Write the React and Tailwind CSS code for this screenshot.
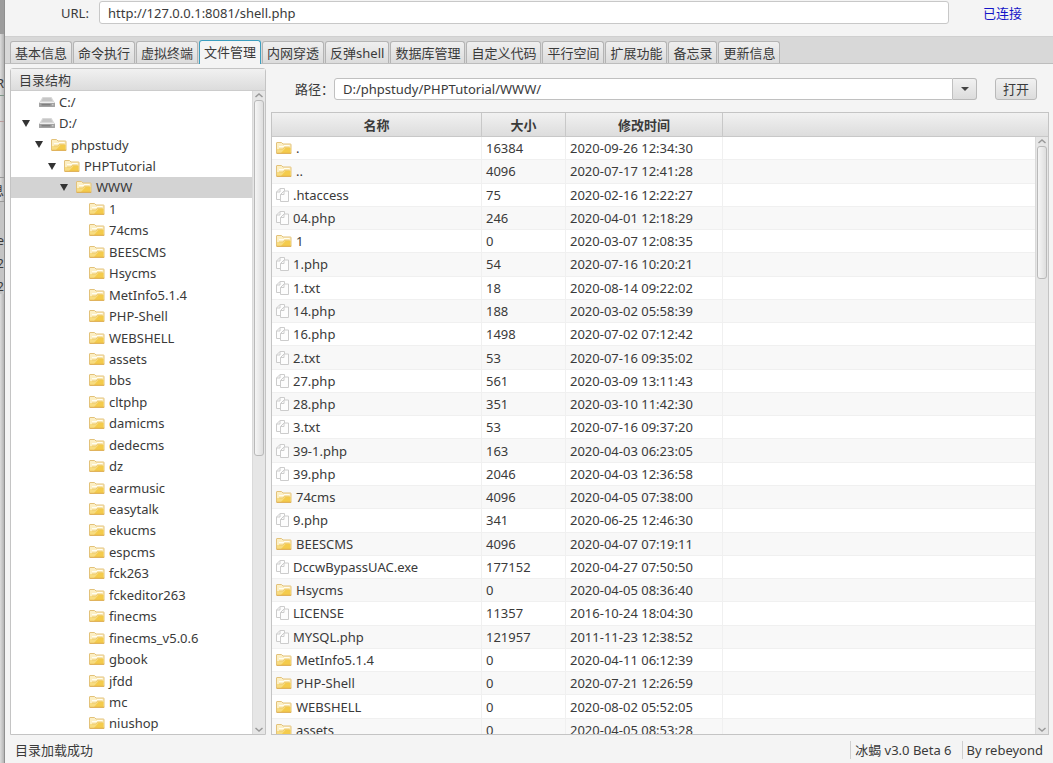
import React from 'react';

const tabs = ['基本信息', '命令执行', '虚拟终端', '文件管理', '内网穿透', '反弹shell', '数据库管理', '自定义代码', '平行空间', '扩展功能', '备忘录', '更新信息'];

const tree = [
    { name: 'C:/', indent: 'pl-[7px]', type: 'disk' },
    { name: 'D:/', indent: 'pl-[7px]', type: 'disk', open: true },
    { name: 'phpstudy', indent: 'pl-5', open: true },
    { name: 'PHPTutorial', indent: 'pl-[33px]', open: true },
    { name: 'WWW', indent: 'pl-[45px]', open: true, selected: true },
    ...['1', '74cms', 'BEESCMS', 'Hsycms', 'MetInfo5.1.4', 'PHP-Shell', 'WEBSHELL', 'assets', 'bbs', 'cltphp', 'damicms', 'dedecms', 'dz', 'earmusic', 'easytalk', 'ekucms', 'espcms', 'fck263', 'fckeditor263', 'finecms', 'finecms_v5.0.6', 'gbook', 'jfdd', 'mc', 'niushop'].map((name) => ({ name, indent: 'pl-[58px]' }))
];

const files = [
    { name: '.', size: 16384, date: '2020-09-26 12:34:30', dir: true },
    { name: '..', size: 4096, date: '2020-07-17 12:41:28', dir: true },
    { name: '.htaccess', size: 75, date: '2020-02-16 12:22:27' },
    { name: '04.php', size: 246, date: '2020-04-01 12:18:29' },
    { name: '1', size: 0, date: '2020-03-07 12:08:35', dir: true },
    { name: '1.php', size: 54, date: '2020-07-16 10:20:21' },
    { name: '1.txt', size: 18, date: '2020-08-14 09:22:02' },
    { name: '14.php', size: 188, date: '2020-03-02 05:58:39' },
    { name: '16.php', size: 1498, date: '2020-07-02 07:12:42' },
    { name: '2.txt', size: 53, date: '2020-07-16 09:35:02' },
    { name: '27.php', size: 561, date: '2020-03-09 13:11:43' },
    { name: '28.php', size: 351, date: '2020-03-10 11:42:30' },
    { name: '3.txt', size: 53, date: '2020-07-16 09:37:20' },
    { name: '39-1.php', size: 163, date: '2020-04-03 06:23:05' },
    { name: '39.php', size: 2046, date: '2020-04-03 12:36:58' },
    { name: '74cms', size: 4096, date: '2020-04-05 07:38:00', dir: true },
    { name: '9.php', size: 341, date: '2020-06-25 12:46:30' },
    { name: 'BEESCMS', size: 4096, date: '2020-04-07 07:19:11', dir: true },
    { name: 'DccwBypassUAC.exe', size: 177152, date: '2020-04-27 07:50:50' },
    { name: 'Hsycms', size: 0, date: '2020-04-05 08:36:40', dir: true },
    { name: 'LICENSE', size: 11357, date: '2016-10-24 18:04:30' },
    { name: 'MYSQL.php', size: 121957, date: '2011-11-23 12:38:52' },
    { name: 'MetInfo5.1.4', size: 0, date: '2020-04-11 06:12:39', dir: true },
    { name: 'PHP-Shell', size: 0, date: '2020-07-21 12:26:59', dir: true },
    { name: 'WEBSHELL', size: 0, date: '2020-08-02 05:52:05', dir: true },
    { name: 'assets', size: 0, date: '2020-04-05 08:53:28', dir: true }
];

const FolderIcon = () => (
    <svg width="16" height="14" viewBox="0 0 16 14" className="shrink-0">
        <path d="M.5 12V2Q.5 1.5 1 1.5H5.5L7 3H14.5Q15 3 15 3.5V12Z" fill="#fcefc4" stroke="#e3c27a" />
        <path d="M8 4.5H13.5" stroke="#fffdf2" />
        <path d="M3 5.5H8" stroke="#fffdf2" />
        <path d="M1 12V8H7L8.5 6H14.5V12Z" fill="#f8dc80" />
        <path d="M5 12L9.5 7H14.5V12Z" fill="#f4cb4c" />
        <path d="M3 8H7L8.5 6.2H13.5" fill="none" stroke="#ecc96d" />
        <path d="M.5 12.3H15.3" stroke="#dca845" />
    </svg>
);

const DiskIcon = () => (
    <svg width="18" height="14" viewBox="0 0 18 14" className="shrink-0">
        <path d="M4.5 2H13.5L17 8H1Z" fill="#d8d8d8" />
        <path d="M5 3H13L14.5 6H3.5Z" fill="#c6c6c6" />
        <path d="M1 7.5H17V11.5Q17 12 16 12H2Q1 12 1 11.5Z" fill="#a2a2a2" />
        <path d="M1.5 7.5H16.5" stroke="#efefef" />
        <path d="M3.5 9.8H12.5" stroke="#717171" />
        <path d="M14 9.8H15.5" stroke="#dcdcdc" />
    </svg>
);

const FileIcon = () => (
    <svg width="14" height="16" viewBox="0 0 14 16" fill="#fdfdfd" stroke="#cccccc" className="shrink-0">
        <path d="M.5 12.5V5L4 1.5H8.5V12.5Z" />
        <path d="M.5 5H4V1.5" fill="none" />
        <path d="M4.5 14.5V7.5L8 4H12.5V14.5Z" />
        <path d="M4.5 7.5H8V4" fill="none" />
    </svg>
);

const ScrollBar = ({ thumb }) => (
    <div className="flex h-full w-[13px] shrink-0 flex-col items-center border-l border-[#dadada] bg-[#e6e6e6]">
        <svg width="10" height="9" viewBox="0 0 10 9" fill="none" stroke="#999" strokeWidth="1.5"><path d="M1.5 6L5 3L8.5 6" /></svg>
        <div className="flex min-h-0 w-full flex-1 flex-col px-px">
            <div className={`w-full rounded-[3px] border border-[#b9b9b9] bg-linear-to-r from-[#f5f5f5] to-[#dedede] ${thumb}`}></div>
        </div>
        <svg width="10" height="9" viewBox="0 0 10 9" fill="none" stroke="#999" strokeWidth="1.5"><path d="M1.5 3L5 6L8.5 3" /></svg>
    </div>
);

const App = () => {
    return (
        <div className="flex h-screen overflow-hidden bg-[#f4f4f4] font-['Noto_Sans','Noto_Sans_CJK_SC',sans-serif] text-[13px] leading-4 text-[#3a3a3a]">
            {/* Edge of the window behind */}
            <div className="flex w-1 shrink-0 flex-col bg-linear-to-r from-[#dcdcdc] to-[#b4b4b4]">
                <div className="h-[34px] bg-[#9c9c9c]"></div>
                <div className="flex h-[62px] items-end justify-end overflow-hidden border-b border-[#7d9688] pb-1">R</div>
                <div className="h-[26px] border-b border-[#b89c9c]"></div>
                <div className="h-14 border-b border-[#999]"></div>
                <div className="flex h-6 items-center justify-end overflow-hidden border-b border-[#999]">息</div>
                <div className="flex h-[92px] flex-col items-end justify-end gap-[7px] overflow-hidden bg-[#c4c4c4]">
                    <span>e</span>
                    <span>2</span>
                    <span>2</span>
                </div>
            </div>

            <div className="flex min-w-0 flex-1 flex-col border-l border-[#8f8f8f]">
                {/* Connection row */}
                <div className="flex h-9 shrink-0 items-start pt-px pl-14">
                    <label htmlFor="url" className="w-[38px] pt-1">URL:</label>
                    <input id="url" defaultValue="http://127.0.0.1:8081/shell.php" className="h-[23px] min-w-0 flex-1 rounded-[3px] border border-[#c8c8c8] bg-white px-2 outline-none" />
                    <span className="w-[104px] pt-1 pl-[34px] text-[#1414c8]">已连接</span>
                </div>

                {/* Tabs */}
                <div className="flex h-7 shrink-0 items-end gap-px border-t border-b border-t-[#d0d0d0] border-b-[#bdbdbd] bg-[#d8d8d8] pl-[5px]">
                    {tabs.map((tab) => (
                        <button key={tab} className={`shrink-0 rounded-t-[3px] border border-b-0 px-1 whitespace-nowrap ${tab === '文件管理' ? '-mb-px h-6 border-[#3c9fc0] bg-[#f4f4f4] pb-px' : 'h-[22px] border-[#b4b4b4] bg-linear-to-b from-[#efefef] to-[#dcdcdc]'}`}>
                            {tab}
                        </button>
                    ))}
                </div>

                <div className="flex min-h-0 flex-1 gap-[5px] pt-1 pr-1 pl-[5px]">
                    {/* Directory tree */}
                    <div className="flex w-64 shrink-0 flex-col rounded-t-[3px] border border-[#c4c4c4] bg-white">
                        <div className="flex h-[22px] shrink-0 items-center border-b border-[#cccccc] bg-linear-to-b from-[#f1f1f1] to-[#dcdcdc] pl-2">目录结构</div>
                        <div className="flex min-h-0 flex-1">
                            <ul className="flex min-w-0 flex-1 flex-col">
                                {tree.map((node) => (
                                    <li key={node.name} className={`flex min-h-0 flex-1 items-center ${node.indent} ${node.selected ? 'bg-[#d3d3d3]' : ''}`}>
                                        <span className="w-5 shrink-0 pl-1">
                                            {node.open && <svg width="8" height="7" viewBox="0 0 8 7"><path d="M0 0H8L4 7Z" fill="#333" /></svg>}
                                        </span>
                                        {node.type === 'disk' ? <DiskIcon /> : <FolderIcon />}
                                        <span className={node.type === 'disk' ? 'pl-[3px]' : 'pl-1'}>{node.name}</span>
                                    </li>
                                ))}
                            </ul>
                            <ScrollBar thumb="h-[57%]" />
                        </div>
                    </div>

                    <div className="flex min-w-0 flex-1 flex-col">
                        {/* Path row */}
                        <div className="flex shrink-0 items-center pt-[10px] pr-3 pb-3 pl-6">
                            <label htmlFor="path" className="w-[39px]">路径：</label>
                            <input id="path" defaultValue="D:/phpstudy/PHPTutorial/WWW/" className="h-[22px] min-w-0 flex-1 rounded-l-[3px] border border-[#c0c0c0] bg-white px-2 outline-none" />
                            <button aria-label="历史路径" className="flex h-[22px] w-6 items-center justify-center rounded-r-[3px] border border-l-0 border-[#b9b9b9] bg-linear-to-b from-[#f1f1f1] to-[#dcdcdc]">
                                <svg width="8" height="4" viewBox="0 0 8 4"><path d="M0 0H8L4 4Z" fill="#444" /></svg>
                            </button>
                            <button className="ml-[18px] h-[22px] w-[42px] rounded-[3px] border border-[#b9b9b9] bg-linear-to-b from-[#f1f1f1] to-[#dcdcdc]">打开</button>
                        </div>

                        {/* File list */}
                        <div className="relative min-h-0 flex-1 overflow-hidden border border-[#c4c4c4] bg-white">
                            <table className="h-[calc(100%+8px)] w-full table-fixed border-separate border-spacing-0">
                                <thead>
                                    <tr className="h-6 bg-linear-to-b from-[#f1f1f1] to-[#dcdcdc]">
                                        <th className="w-[210px] border-r border-b border-[#c8c8c8] p-0">名称</th>
                                        <th className="w-[84px] border-r border-b border-[#c8c8c8] p-0">大小</th>
                                        <th className="w-[157px] border-r border-b border-[#c8c8c8] p-0">修改时间</th>
                                        <th className="border-b border-[#c8c8c8] p-0"></th>
                                    </tr>
                                </thead>
                                <tbody>
                                    {files.map((file) => (
                                        <tr key={file.name} className="even:bg-[#f8f8f8]">
                                            <td className="border-r border-b border-[#f0f0f0] p-0 pl-1">
                                                <div className="flex items-center">
                                                    {file.dir ? <FolderIcon /> : <FileIcon />}
                                                    <span className={file.dir ? 'pl-1' : 'pl-[3px]'}>{file.name}</span>
                                                </div>
                                            </td>
                                            <td className="border-r border-b border-[#f0f0f0] p-0 pl-1">{file.size}</td>
                                            <td className="border-r border-b border-[#f0f0f0] p-0 pl-1">{file.date}</td>
                                            <td className="border-b border-[#f0f0f0] p-0"></td>
                                        </tr>
                                    ))}
                                </tbody>
                            </table>
                            <div className="absolute top-6 right-0 bottom-0">
                                <ScrollBar thumb="h-[23%]" />
                            </div>
                        </div>
                    </div>
                </div>

                {/* Status bar */}
                <div className="flex h-7 shrink-0 items-center pt-px pr-[10px] pl-[10px]">
                    <span className="flex-1">目录加载成功</span>
                    <span className="border-l border-[#cfcfcf] px-1 py-px">冰蝎 v3.0 Beta 6</span>
                    <span className="ml-[6px] border-l border-[#cfcfcf] py-px pl-1">By rebeyond</span>
                </div>
            </div>
        </div>
    );
};

export default App;
